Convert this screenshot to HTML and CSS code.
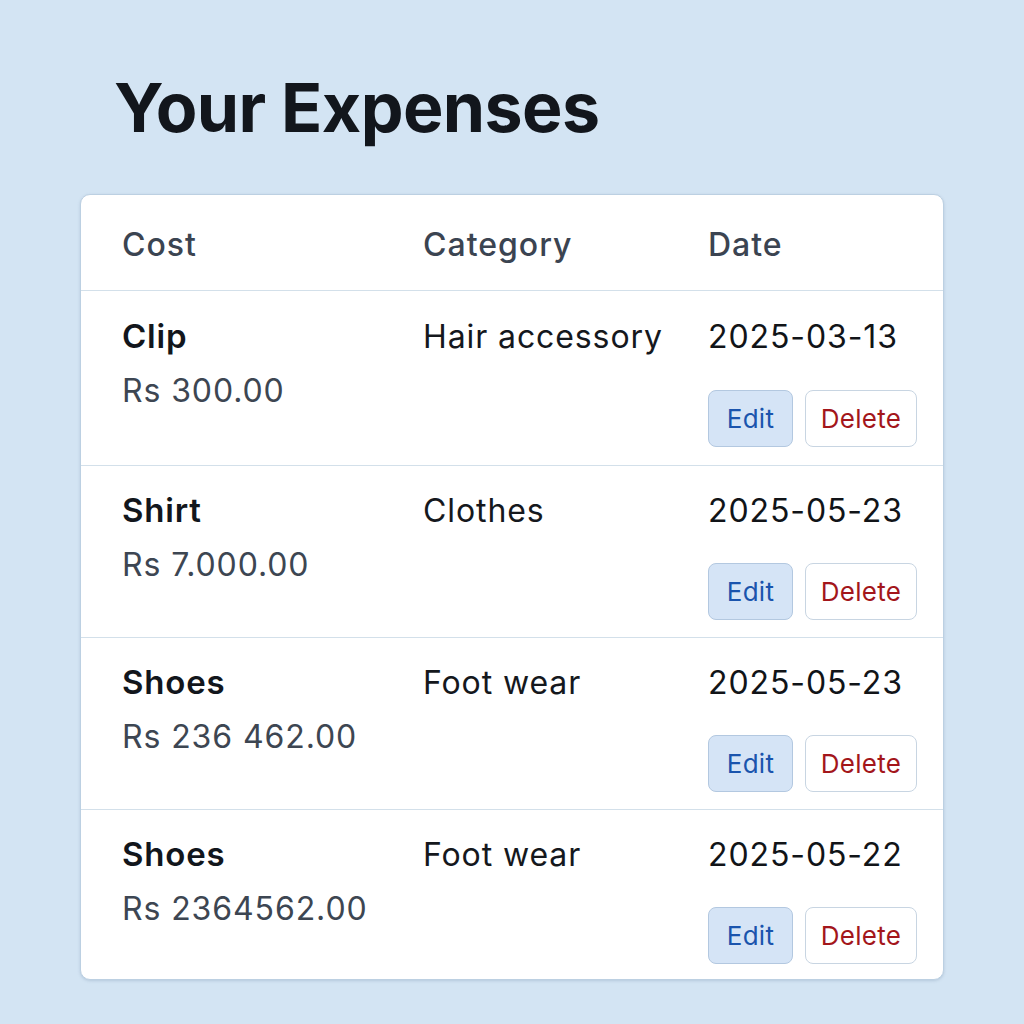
FILE: index.html
```html
<!DOCTYPE html>
<html lang="en">
<head>
<meta charset="utf-8">
<title>Your Expenses</title>
<link rel="stylesheet" href="styles.css">
</head>
<body>
<main class="page">
  <h1 class="title">Your Expenses</h1>
  <section class="card">
    <div class="row head">
      <div class="cell">Cost</div>
      <div class="cell">Category</div>
      <div class="cell">Date</div>
    </div>
    <div class="row item first">
      <div class="cell cost"><div class="name">Clip</div><div class="price">Rs 300.00</div></div>
      <div class="cell cat">Hair accessory</div>
      <div class="cell date"><div class="d">2025-03-13</div><div class="actions"><button class="btn edit">Edit</button><button class="btn del">Delete</button></div></div>
    </div>
    <div class="row item">
      <div class="cell cost"><div class="name">Shirt</div><div class="price">Rs 7.000.00</div></div>
      <div class="cell cat">Clothes</div>
      <div class="cell date"><div class="d">2025-05-23</div><div class="actions"><button class="btn edit">Edit</button><button class="btn del">Delete</button></div></div>
    </div>
    <div class="row item">
      <div class="cell cost"><div class="name">Shoes</div><div class="price">Rs 236 462.00</div></div>
      <div class="cell cat">Foot wear</div>
      <div class="cell date"><div class="d">2025-05-23</div><div class="actions"><button class="btn edit">Edit</button><button class="btn del">Delete</button></div></div>
    </div>
    <div class="row item last">
      <div class="cell cost"><div class="name">Shoes</div><div class="price">Rs 2364562.00</div></div>
      <div class="cell cat">Foot wear</div>
      <div class="cell date"><div class="d">2025-05-22</div><div class="actions"><button class="btn edit">Edit</button><button class="btn del">Delete</button></div></div>
    </div>
  </section>
</main>
</body>
</html>
```
FILE: styles.css
```css
* { box-sizing: border-box; }
html, body { margin: 0; padding: 0; }
body {
  background: #d3e4f3;
  font-family: Inter, "Noto Sans", "Liberation Sans", sans-serif;
  color: #14171c;
  width: 1024px;
  height: 1024px;
  overflow: hidden;
}
.page {
  padding: 66px 80px 0 80px;
}
.title {
  margin: 0 0 46px 34px;
  font-size: 68px;
  line-height: 82px;
  font-weight: 700;
  letter-spacing: -0.6px;
  color: #12161c;
}
.card {
  background: #ffffff;
  border: 1px solid #bcd0e2;
  border-radius: 10px;
  box-shadow: 0 1px 3px rgba(90, 120, 150, 0.25);
  overflow: hidden;
}
.row {
  display: grid;
  grid-template-columns: 301px 285px 1fr;
  padding-left: 41px;
  border-bottom: 1px solid #d3e0ea;
}
.row.last { border-bottom: none; }
.head {
  padding-top: 31px;
  padding-bottom: 26px;
  font-size: 32px;
  line-height: 38px;
  letter-spacing: 1px;
  color: #3b4451;
  font-weight: 500;
}
.item {
  padding-top: 26px;
  padding-bottom: 17px;
  font-size: 32px;
  line-height: 38px;
  letter-spacing: 0.9px;
}
.item.first { padding-top: 27px; padding-bottom: 18px; }
.item.last { padding-bottom: 15px; }
.name {
  font-weight: 600;
  font-size: 33px;
  letter-spacing: 0.8px;
  color: #12161c;
  margin-top: -1px;
}
.price { margin-top: 17px; color: #3d4652; }
.cat { color: #15181d; }
.d { color: #111418; }
.actions {
  display: flex;
  gap: 12px;
  margin-top: 34px;
  letter-spacing: 0.3px;
}
.item:not(.first) .actions { margin-top: 33px; }
.btn {
  font-family: inherit;
  font-size: 26px;
  height: 57px;
  border-radius: 8px;
  padding: 0;
  cursor: pointer;
  letter-spacing: inherit;
}
.edit {
  width: 85px;
  background: #d5e4f6;
  border: 1px solid #b3c8e0;
  color: #1a54ad;
}
.del {
  width: 112px;
  background: #ffffff;
  border: 1px solid #c8d5e2;
  color: #a3161b;
}
```
